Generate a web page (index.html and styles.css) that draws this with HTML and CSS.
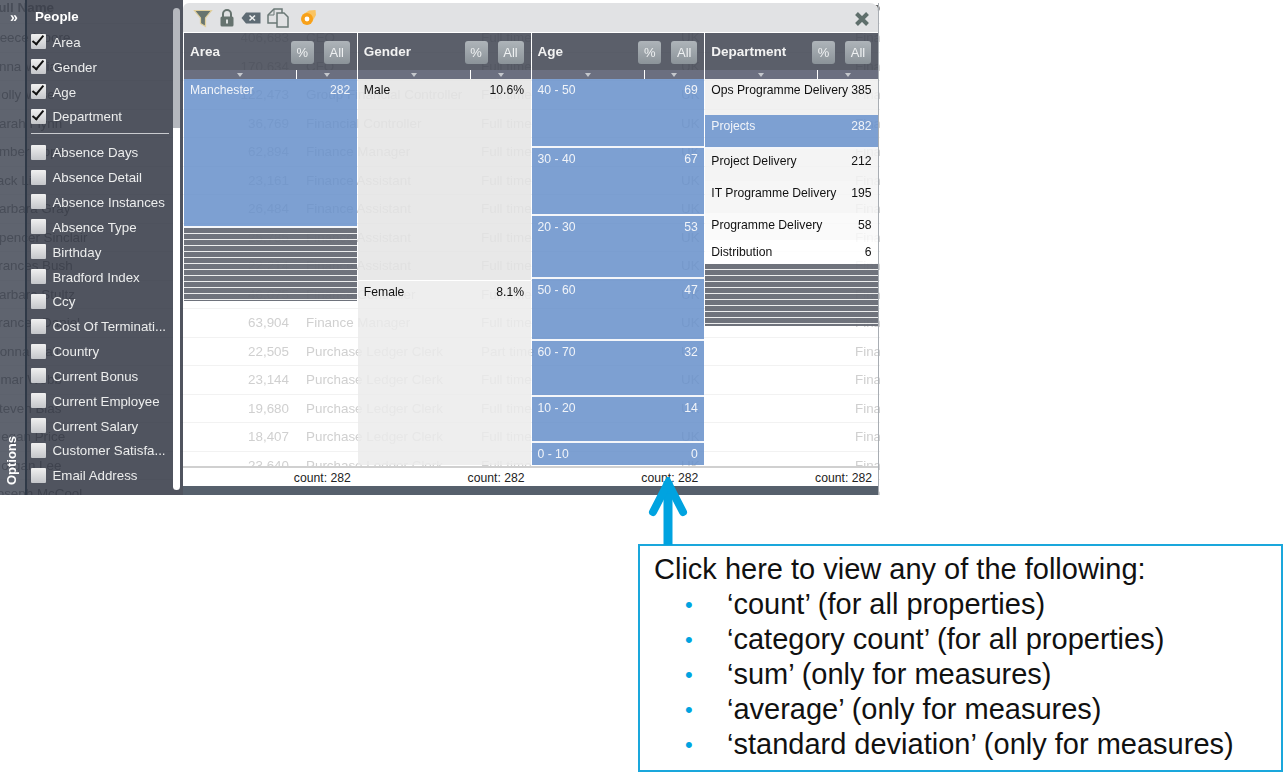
FILE: index.html
```html
<!DOCTYPE html>
<html lang="en">
<head>
    <meta charset="UTF-8">
    <meta name="viewport" content="width=device-width, initial-scale=1.0">
    <title>Count options</title>
    <link rel="stylesheet" href="styles.css">
</head>
<body>
    <div class="app">
        <!-- table behind the overlays -->
        <div class="table">
            <div class="row row-head"><span>Full Name</span><span class="num">Current Salary</span><span>Job Title</span><span>Full time</span><span>UK</span><span>Department</span></div>
            <div class="row"><span>Reece Moore</span><span class="num">406,683</span><span>CEO</span><span>Full time</span><span>UK</span><span>Finance</span></div>
            <div class="row"><span>Anna Williams</span><span class="num">170,634</span><span>CFO</span><span>Full time</span><span>UK</span><span>Finance</span></div>
            <div class="row"><span>Molly Wise</span><span class="num">122,473</span><span>Group Financial Controller</span><span>Full time</span><span>UK</span><span>Finance</span></div>
            <div class="row"><span>Sarah Flynn</span><span class="num">36,769</span><span>Financial Controller</span><span>Full time</span><span>UK</span><span>Finance</span></div>
            <div class="row"><span>Amber Hope</span><span class="num">62,894</span><span>Finance Manager</span><span>Full time</span><span>UK</span><span>Finance</span></div>
            <div class="row"><span>Jack Lis</span><span class="num">23,161</span><span>Finance Assistant</span><span>Full time</span><span>UK</span><span>Finance</span></div>
            <div class="row"><span>Barbara Gray</span><span class="num">26,484</span><span>Finance Assistant</span><span>Full time</span><span>UK</span><span>Finance</span></div>
            <div class="row"><span>Spencer Sinclair</span><span class="num">25,785</span><span>Finance Assistant</span><span>Full time</span><span>UK</span><span>Finance</span></div>
            <div class="row"><span>Frances Bush</span><span class="num">22,214</span><span>Finance Assistant</span><span>Full time</span><span>UK</span><span>Finance</span></div>
            <div class="row"><span>Barbara Stultz</span><span class="num">46,075</span><span>Finance Controller</span><span>Full time</span><span>UK</span><span>Finance</span></div>
            <div class="row"><span>Frances Daniel</span><span class="num">63,904</span><span>Finance Manager</span><span>Full time</span><span>UK</span><span>Finance</span></div>
            <div class="row"><span>Donna Wall</span><span class="num">22,505</span><span>Purchase Ledger Clerk</span><span>Part time</span><span>UK</span><span>Finance</span></div>
            <div class="row"><span>Omar Webb</span><span class="num">23,144</span><span>Purchase Ledger Clerk</span><span>Full time</span><span>UK</span><span>Finance</span></div>
            <div class="row"><span>Steven Blas</span><span class="num">19,680</span><span>Purchase Ledger Clerk</span><span>Full time</span><span>UK</span><span>Finance</span></div>
            <div class="row"><span>Megan Price</span><span class="num">18,407</span><span>Purchase Ledger Clerk</span><span>Full time</span><span>UK</span><span>Finance</span></div>
            <div class="row"><span>Morgan Lee</span><span class="num">23,640</span><span>Purchase Ledger Clerk</span><span>Full time</span><span>UK</span><span>Finance</span></div>
            <div class="row"><span>Joseph McCool</span><span class="num">21,300</span><span>Purchase Ledger Clerk</span><span>Full time</span><span>UK</span><span>Finance</span></div>
        </div>

        <aside class="sidebar">
            <div class="strip">
                <span class="expand">»</span>
                <span class="options">Options</span>
            </div>
            <div class="fields">
                <div class="fields-title">People</div>
                <div class="field"><span class="box checked"></span>Area</div>
                <div class="field"><span class="box checked"></span>Gender</div>
                <div class="field"><span class="box checked"></span>Age</div>
                <div class="field"><span class="box checked"></span>Department</div>
                <div class="fields-rule"></div>
                <div class="field"><span class="box"></span>Absence Days</div>
                <div class="field"><span class="box"></span>Absence Detail</div>
                <div class="field"><span class="box"></span>Absence Instances</div>
                <div class="field"><span class="box"></span>Absence Type</div>
                <div class="field"><span class="box"></span>Birthday</div>
                <div class="field"><span class="box"></span>Bradford Index</div>
                <div class="field"><span class="box"></span>Ccy</div>
                <div class="field"><span class="box"></span>Cost Of Terminati...</div>
                <div class="field"><span class="box"></span>Country</div>
                <div class="field"><span class="box"></span>Current Bonus</div>
                <div class="field"><span class="box"></span>Current Employee</div>
                <div class="field"><span class="box"></span>Current Salary</div>
                <div class="field"><span class="box"></span>Customer Satisfa...</div>
                <div class="field"><span class="box"></span>Email Address</div>
            </div>
            <div class="scroll"><div class="thumb"></div><div class="track"></div></div>
        </aside>

        <section class="chart">
            <div class="toolbar">
                <svg class="tool" width="20" height="20" viewBox="0 0 20 20"><path d="M1.5 2.5H18.5L12.5 10V18.5L7.5 15.5V10Z" fill="#68756f" stroke="#e0cf9c" stroke-width="1.2"/></svg>
                <svg class="tool" width="16" height="20" viewBox="0 0 16 20"><path d="M4 9V6a4 4 0 0 1 8 0v3" fill="none" stroke="#66736f" stroke-width="2"/><rect x="1.5" y="8.5" width="13" height="10" rx="1.5" fill="#66736f"/><rect x="7" y="11.5" width="2" height="4" fill="#dfe2e2"/></svg>
                <svg class="tool" width="20" height="14" viewBox="0 0 20 14"><path d="M5 1.5H19.5V12.5H5L.5 7Z" fill="#5e6b74"/><path d="M8.5 4.5L14 9.5M14 4.5L8.5 9.5" stroke="#eef0f0" stroke-width="1.6"/></svg>
                <svg class="tool" width="22" height="20" viewBox="0 0 22 20"><path d="M7 1H15V15H1V7Z" fill="none" stroke="#6a7876" stroke-width="1.5"/><path d="M7 1V7H1" fill="none" stroke="#6a7876" stroke-width="1"/><path d="M10 5H17L21 9V19H10Z" fill="#e1e2e4" stroke="#6a7876" stroke-width="1.5"/></svg>
                <svg class="tool tool-ring" width="17" height="17" viewBox="0 0 17 17"><path d="M2 6L9 1.5 15.5 1 16 6 12 13Z" fill="#fac462"/><circle cx="7" cy="10" r="6" fill="#f7a11a"/><circle cx="7" cy="10" r="2.4" fill="#fff"/></svg>
                <svg class="close" width="16" height="16" viewBox="0 0 16 16"><path d="M2.5 2.5L13.5 13.5M13.5 2.5L2.5 13.5" stroke="#5f6f6c" stroke-width="4"/></svg>
            </div>
            <div class="columns">
                <div class="col">
                    <div class="col-head"><span class="col-title">Area</span><span class="btn">%</span><span class="btn btn-all">All</span></div>
                    <div class="col-sort"><span class="sort sort-name"></span><span class="sort sort-value"></span></div>
                    <div class="col-body">
                        <div class="seg seg-blue" style="height:149px"><span>Manchester</span><span>282</span></div>
                        <div class="stripes" style="height:73px"></div>
                    </div>
                </div>
                <div class="col">
                    <div class="col-head"><span class="col-title">Gender</span><span class="btn">%</span><span class="btn btn-all">All</span></div>
                    <div class="col-sort"><span class="sort sort-name"></span><span class="sort sort-value"></span></div>
                    <div class="col-body">
                        <div class="seg seg-grey" style="height:202px"><span>Male</span><span>10.6%</span></div>
                        <div class="seg seg-light" style="height:184px"><span>Female</span><span>8.1%</span></div>
                    </div>
                </div>
                <div class="col">
                    <div class="col-head"><span class="col-title">Age</span><span class="btn">%</span><span class="btn btn-all">All</span></div>
                    <div class="col-sort"><span class="sort sort-name"></span><span class="sort sort-value"></span></div>
                    <div class="col-body">
                        <div class="seg seg-blue" style="height:69px"><span>40 - 50</span><span>69</span></div>
                        <div class="seg seg-blue" style="height:68px"><span>30 - 40</span><span>67</span></div>
                        <div class="seg seg-blue" style="height:63px"><span>20 - 30</span><span>53</span></div>
                        <div class="seg seg-blue" style="height:62px"><span>50 - 60</span><span>47</span></div>
                        <div class="seg seg-blue" style="height:56px"><span>60 - 70</span><span>32</span></div>
                        <div class="seg seg-blue" style="height:46px"><span>10 - 20</span><span>14</span></div>
                        <div class="seg seg-blue seg-last" style="height:22px"><span>0 - 10</span><span>0</span></div>
                    </div>
                </div>
                <div class="col">
                    <div class="col-head"><span class="col-title">Department</span><span class="btn">%</span><span class="btn btn-all">All</span></div>
                    <div class="col-sort"><span class="sort sort-name"></span><span class="sort sort-value"></span></div>
                    <div class="col-body">
                        <div class="seg seg-dept1" style="height:36px"><span>Ops Programme Delivery</span><span>385</span></div>
                        <div class="seg seg-blue" style="height:34px"><span>Projects</span><span>282</span></div>
                        <div class="seg seg-dept2" style="height:32px"><span>Project Delivery</span><span>212</span></div>
                        <div class="seg seg-dept3" style="height:32px"><span>IT Programme Delivery</span><span>195</span></div>
                        <div class="seg seg-dept4" style="height:27px"><span>Programme Delivery</span><span>58</span></div>
                        <div class="seg seg-dept5" style="height:24px"><span>Distribution</span><span>6</span></div>
                        <div class="stripes" style="height:62px"></div>
                    </div>
                </div>
            </div>
            <div class="totals">
                <span>count: 282</span><span>count: 282</span><span>count: 282</span><span>count: 282</span>
            </div>
            <div class="chart-foot"></div>
        </section>
    </div>

    <svg class="arrow" width="40" height="68" viewBox="0 0 40 68"><path d="M20 4V68" stroke="#00a3e0" stroke-width="9"/><path d="M5 35L20 6 35 35" fill="none" stroke="#00a3e0" stroke-width="8" stroke-linecap="round" stroke-linejoin="miter"/></svg>

    <div class="callout">
        <p>Click here to view any of the following:</p>
        <ul>
            <li>‘count’ (for all properties)</li>
            <li>‘category count’ (for all properties)</li>
            <li>‘sum’ (only for measures)</li>
            <li>‘average’ (only for measures)</li>
            <li>‘standard deviation’ (only for measures)</li>
        </ul>
    </div>
</body>
</html>
```

FILE: styles.css
```css
body{
    margin: 0;
    background: #fff;
    font-family: "Liberation Sans", Arial, sans-serif;
    color: #111;
}

.app{
    position: relative;
    width: 880px;
    height: 495px;
    overflow: hidden;
    filter: blur(0.35px);
}

/* table behind */
.table{
    margin-left: -18px;
    font-size: 13.4px;
    color: #d0d0d0;
}

.row{
    display: grid;
    grid-template-columns: 150px 166px 175px 200px 174px 100px;
    height: 28.5px;
    line-height: 28px;
    border-bottom: 1px solid #f2f2f2;
    box-sizing: border-box;
    white-space: nowrap;
}

.row span{
    padding-left: 8px;
    overflow: hidden;
}

.row span:first-child{
    color: #8a8a8a;
}

.row .num{
    padding: 0 9px 0 0;
    text-align: right;
}

.row-head{
    height: 24px;
    line-height: 16px;
    font-weight: bold;
    color: #555;
}

/* left options panel */
.sidebar{
    position: absolute;
    left: 0;
    top: 0;
    bottom: 0;
    width: 183px;
    display: flex;
}

.strip{
    width: 25px;
    background: rgba(55, 61, 75, 0.8);
    border-right: 2px solid #2f3947;
    display: flex;
    flex-direction: column;
    align-items: center;
    justify-content: space-between;
    color: #fff;
    font-weight: bold;
}

.expand{
    margin-top: 8px;
    font-size: 14px;
    line-height: 18px;
    padding-left: 3px;
}

.options{
    writing-mode: vertical-rl;
    transform: rotate(180deg);
    font-size: 13px;
    margin: 0 3px 10px 0;
}

.fields{
    width: 145px;
    background: rgba(49, 54, 67, 0.85);
    color: #eceded;
    font-size: 13.3px;
    padding-left: 4px;
    box-sizing: border-box;
}

.fields-title{
    margin: 8px 0 0 4px;
    height: 22px;
    line-height: 18px;
    font-weight: bold;
    color: #fff;
}

.field{
    display: flex;
    align-items: center;
    gap: 6.5px;
    height: 24.85px;
    white-space: nowrap;
}

.box{
    flex: none;
    position: relative;
    width: 15px;
    height: 15px;
    background: linear-gradient(#f0f0f0, #c4c6ca);
    border-radius: 1px;
    margin-top: -1px;
}

.checked::after{
    content: "";
    position: absolute;
    left: 4px;
    top: -1px;
    width: 6px;
    height: 12px;
    border: solid #111;
    border-width: 0 2.5px 2.5px 0;
    transform: rotate(40deg);
    box-sizing: border-box;
}

.fields-rule{
    height: 1px;
    background: #c9cbcf;
    margin: 4px 3px 6px 0;
}

.scroll{
    width: 11px;
    padding: 8px 3px 5px 1px;
    box-sizing: border-box;
    display: flex;
    flex-direction: column;
    background: rgba(49, 54, 67, 0.85);
}

.thumb{
    flex: none;
    height: 120px;
    background: #b5b8be;
    border-radius: 4px 4px 0 0;
}

.track{
    flex: 1;
    background: #fff;
    border-radius: 0 0 4px 4px;
}

/* chart overlay */
.chart{
    position: absolute;
    left: 183px;
    top: 3px;
    width: 695px;
    height: 492px;
    display: flex;
    flex-direction: column;
    border-right: 1px solid #a8adb3;
}

.toolbar{
    flex: none;
    height: 30px;
    display: flex;
    align-items: center;
    gap: 6px;
    padding-left: 10px;
    background: #e1e2e4;
    border-radius: 6px 8px 0 0;
    box-sizing: border-box;
    border-bottom: 1px solid #fff;
}

.tool-ring{
    margin-left: 5px;
}

.close{
    margin-left: auto;
    margin-right: 8px;
    margin-top: 2px;
}

.columns{
    flex: none;
    height: 433px;
    display: grid;
    grid-template-columns: repeat(4, 1fr);
    gap: 1px;
    padding-left: 1px;
    box-sizing: border-box;
}

.col{
    display: flex;
    flex-direction: column;
    min-width: 0;
}

.col-head{
    flex: none;
    height: 37px;
    display: flex;
    align-items: center;
    gap: 10px;
    padding: 0 7px 0 6px;
    background: rgba(62, 67, 80, 0.85);
    color: #f2f2f2;
}

.col-title{
    margin-right: auto;
    margin-top: -1px;
    font-size: 13.5px;
    font-weight: bold;
}

.btn{
    width: 23px;
    height: 23px;
    margin-top: 1px;
    line-height: 23px;
    text-align: center;
    font-size: 13px;
    color: #eef0f1;
    background: linear-gradient(#aeb4b9, #8b9399);
    border-radius: 3px;
}

.btn-all{
    width: 26px;
}

.col-sort{
    flex: none;
    height: 9px;
    display: flex;
    background: #6b6f80;
}

.sort{
    position: relative;
    display: block;
}

.sort::after{
    content: "";
    position: absolute;
    left: 50%;
    top: 3px;
    margin-left: -3px;
    border: 3px solid transparent;
    border-top: 4px solid #c4c7cc;
    border-bottom: 0;
}

.sort-name{
    width: 112px;
    border-right: 1px solid #fff;
}

.sort-value{
    flex: 1;
}

.col-body{
    flex: 1;
    min-height: 0;
    overflow: hidden;
}

.seg{
    display: flex;
    justify-content: space-between;
    padding: 4px 6.5px 0 6px;
    font-size: 12.2px;
    line-height: 14px;
    color: #111;
    box-sizing: border-box;
    white-space: nowrap;
}

.seg-blue{
    background: rgba(102, 143, 202, 0.85);
    border-bottom: 2px solid #f4f6fa;
    color: #f1f4f9;
}

.seg-last{
    border-bottom: 0;
}

.seg-grey{ background: rgba(228, 228, 228, 0.85); border-bottom: 1px solid #fff; }
.seg-light{ background: rgba(235, 235, 235, 0.85); }
.seg-dept1{ background: rgba(238, 238, 238, 0.85); }
.seg-dept2{ background: rgba(242, 242, 242, 0.85); padding-top: 5px; }
.seg-dept3{ background: rgba(244, 244, 244, 0.85); padding-top: 5px; }
.seg-dept4{ background: rgba(249, 249, 249, 0.85); padding-top: 5px; }
.seg-dept5{ background: rgba(255, 255, 255, 0.85); padding-top: 5px; }

.stripes{
    background: repeating-linear-gradient(#666a74 0, #666a74 5px, #eceded 5px, #eceded 6px);
    opacity: 0.94;
}

.totals{
    flex: none;
    height: 20px;
    display: grid;
    grid-template-columns: repeat(4, 1fr);
    gap: 1px;
    padding-left: 1px;
    background: #fff;
    border-top: 2px solid #d0d0d0;
    box-sizing: border-box;
    font-size: 12.2px;
    line-height: 20px;
    text-align: right;
    color: #222;
}

.totals span{
    padding-right: 6px;
}

.chart-foot{
    flex: 1;
    background: #56606c;
}

/* callout below */
.arrow{
    position: absolute;
    left: 648px;
    top: 477px;
}

.callout{
    width: 645px;
    height: 228px;
    margin: 49px 0 0 638px;
    border: 2px solid #1aa7dc;
    box-sizing: border-box;
    padding: 6px 0 0 14px;
    font-size: 29px;
    line-height: 35px;
    color: #111;
}

.callout p{
    margin: 0;
}

.callout ul{
    margin: 0;
    padding: 0 0 0 31px;
    list-style: none;
}

.callout li{
    display: flex;
    white-space: nowrap;
}

.callout li::before{
    content: "•";
    flex: none;
    width: 42px;
    font-size: 22px;
    color: #00a3e0;
}
```
